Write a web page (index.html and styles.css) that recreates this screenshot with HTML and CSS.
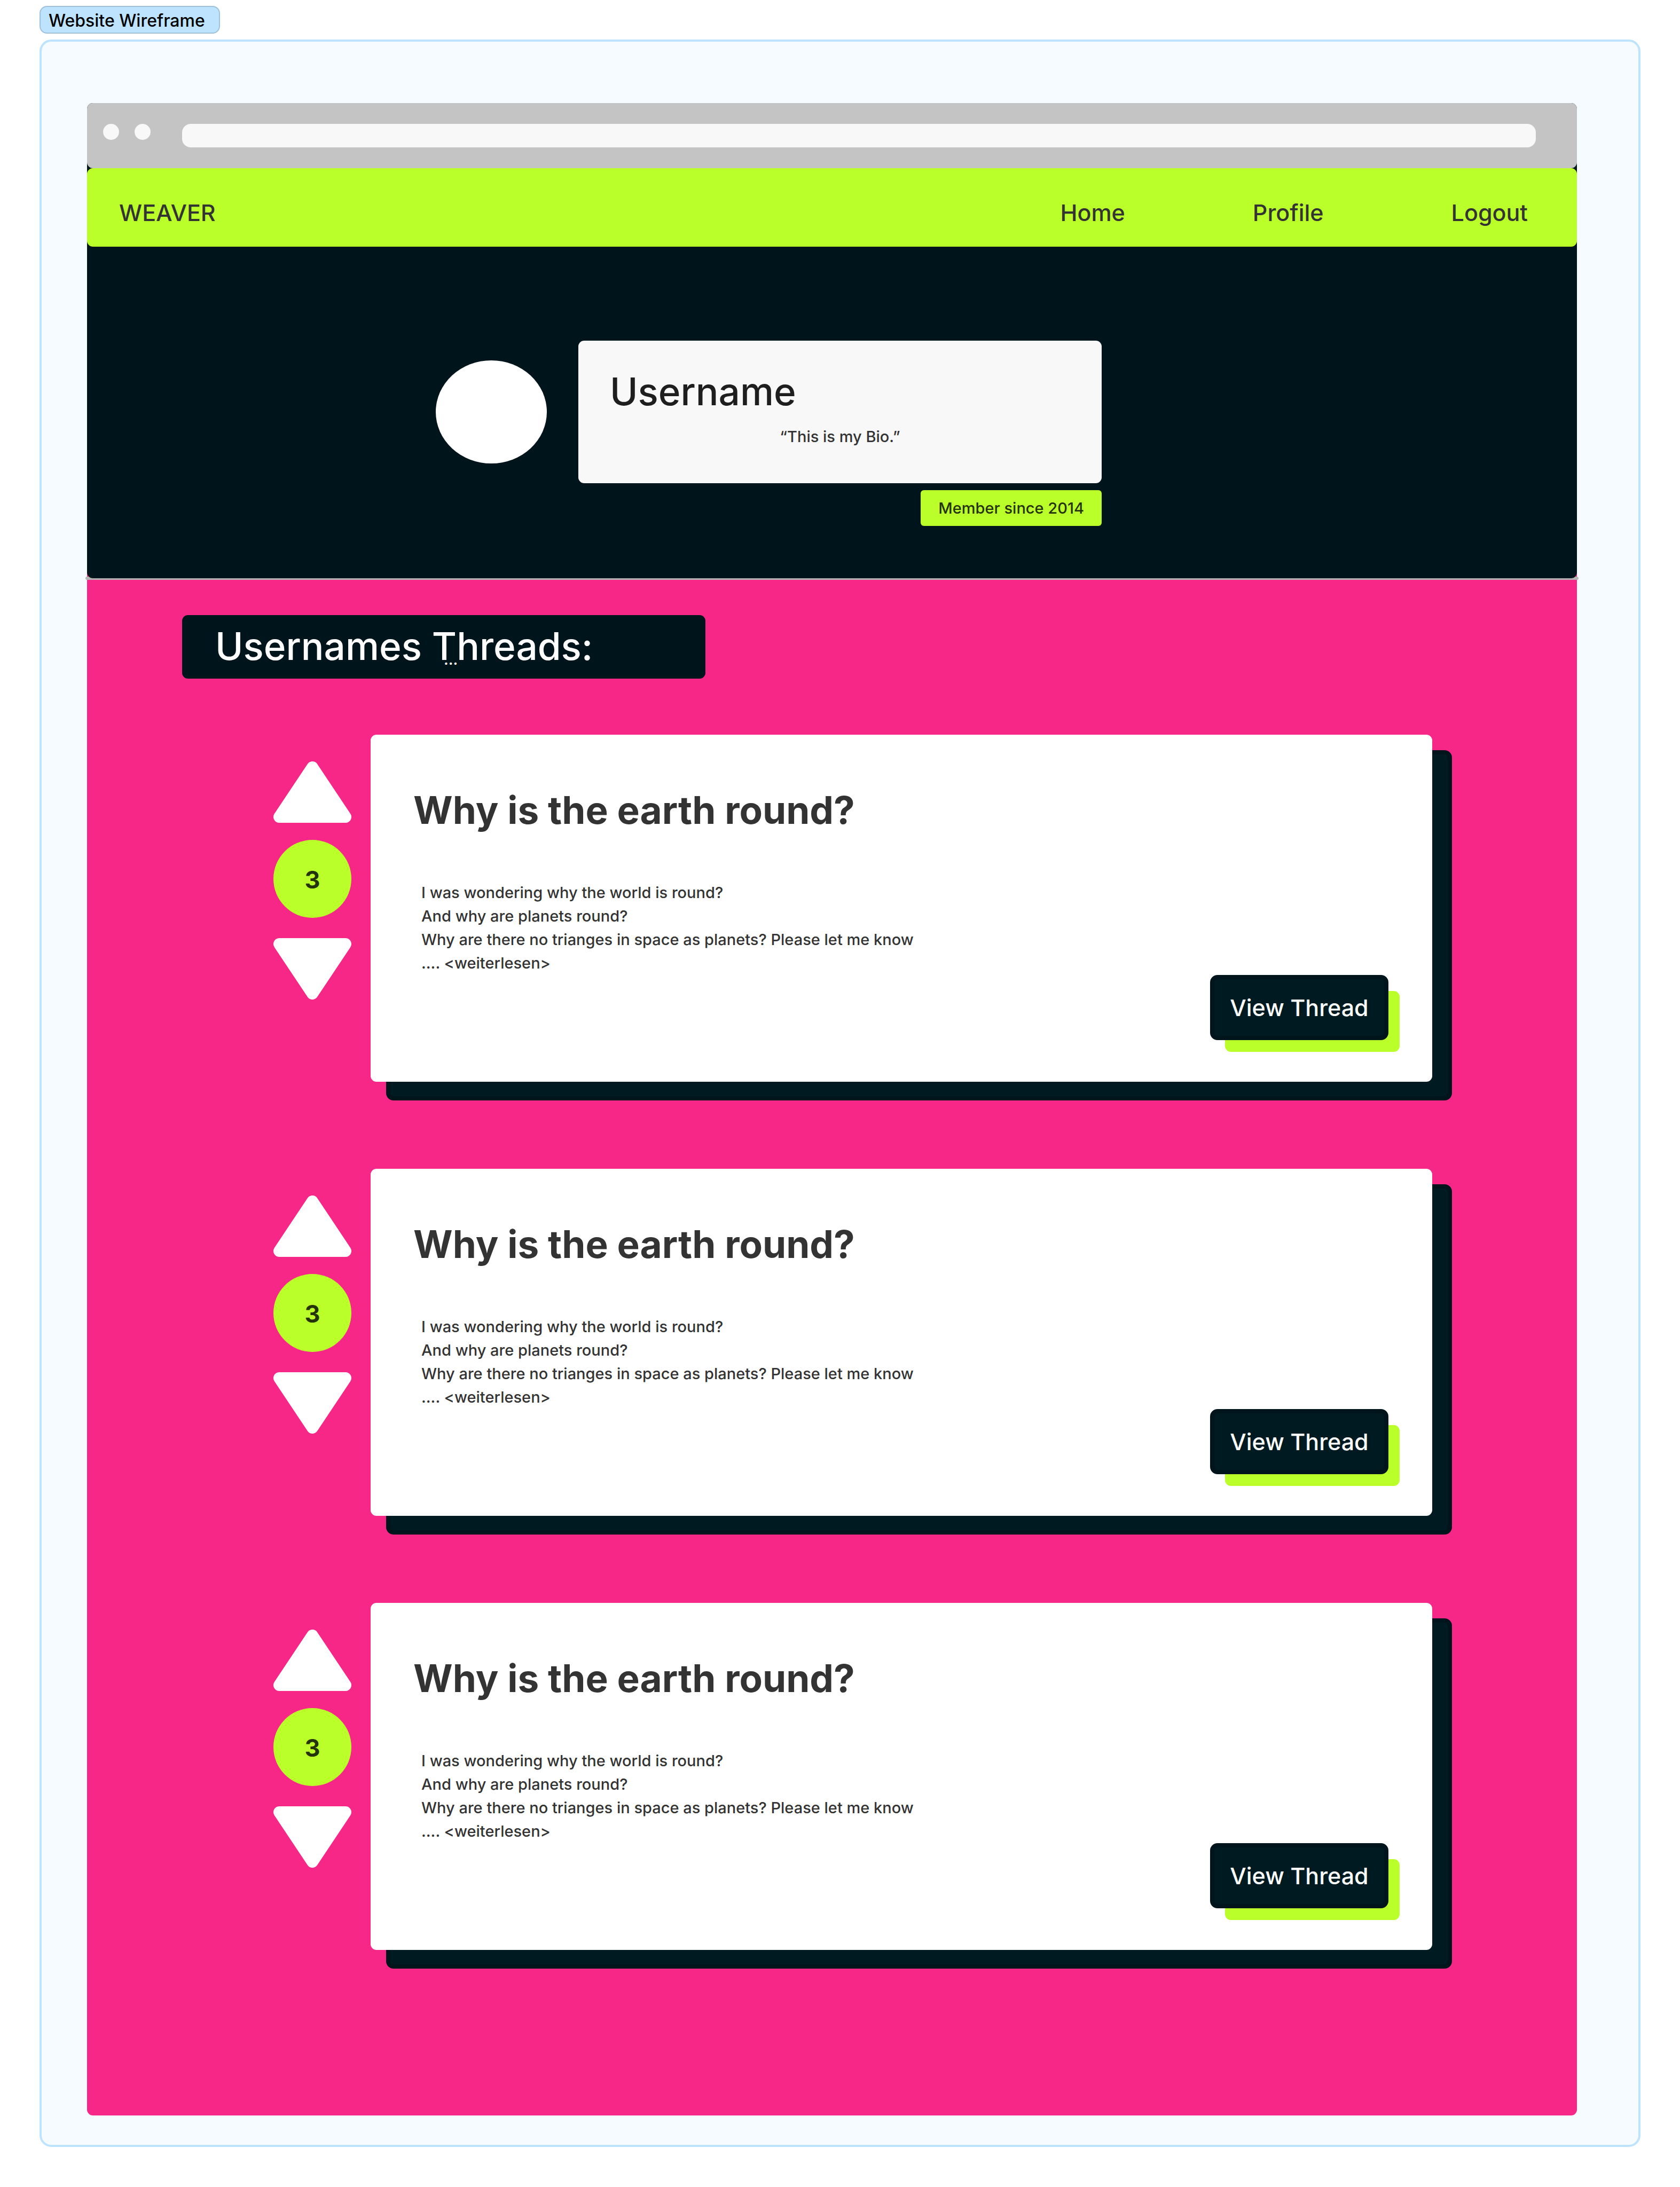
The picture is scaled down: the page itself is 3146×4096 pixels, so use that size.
FILE: index.html
```html
<!DOCTYPE html>
<html lang="en">
<head>
<meta charset="utf-8">
<meta name="viewport" content="width=device-width, initial-scale=1">
<title>Website Wireframe</title>
<link rel="stylesheet" href="styles.css">
</head>
<body>
<div class="section-label">Website Wireframe</div>
<div class="section-frame">
  <div class="wireframe">
    <div class="browser-bar">
      <span class="browser-dot"></span>
      <span class="browser-dot"></span>
      <input class="browser-url" type="text" aria-label="Address">
    </div>
    <header class="site-nav">
      <a class="nav-link" href="#">WEAVER</a>
      <nav class="nav-links">
        <a class="nav-link" href="#">Home</a>
        <a class="nav-link" href="#">Profile</a>
        <a class="nav-link" href="#">Logout</a>
      </nav>
    </header>
    <section class="hero">
      <div class="avatar"></div>
      <div class="profile">
        <div class="profile-card">
          <h1 class="profile-name">Username</h1>
          <p class="profile-bio">“This is my Bio.”</p>
        </div>
        <p class="member-badge">Member since 2014</p>
      </div>
    </section>
    <div class="hero-rule"></div>
    <main class="threads">
      <h2 class="threads-heading">Usernames Threads:<span class="threads-more">...</span></h2>
      <div class="thread-list">
        <article class="thread">
          <div class="votes">
            <button class="vote" type="button" aria-label="Vote up"><svg class="vote-icon" viewBox="0 0 146 115"><path d="M11 104 73 11l62 93z"/></svg></button>
            <span class="vote-count">3</span>
            <button class="vote" type="button" aria-label="Vote down"><svg class="vote-icon" viewBox="0 0 146 115"><path d="M11 11h124L73 104z"/></svg></button>
          </div>
          <div class="card">
            <h3 class="card-title">Why is the earth round?</h3>
            <p class="card-text">I was wondering why the world is round?<br>And why are planets round?<br>Why are there no trianges in space as planets? Please let me know<br>.... &lt;weiterlesen&gt;</p>
            <div class="card-action"><button class="view-button" type="button">View Thread</button></div>
          </div>
        </article>
        <article class="thread">
          <div class="votes">
            <button class="vote" type="button" aria-label="Vote up"><svg class="vote-icon" viewBox="0 0 146 115"><path d="M11 104 73 11l62 93z"/></svg></button>
            <span class="vote-count">3</span>
            <button class="vote" type="button" aria-label="Vote down"><svg class="vote-icon" viewBox="0 0 146 115"><path d="M11 11h124L73 104z"/></svg></button>
          </div>
          <div class="card">
            <h3 class="card-title">Why is the earth round?</h3>
            <p class="card-text">I was wondering why the world is round?<br>And why are planets round?<br>Why are there no trianges in space as planets? Please let me know<br>.... &lt;weiterlesen&gt;</p>
            <div class="card-action"><button class="view-button" type="button">View Thread</button></div>
          </div>
        </article>
        <article class="thread">
          <div class="votes">
            <button class="vote" type="button" aria-label="Vote up"><svg class="vote-icon" viewBox="0 0 146 115"><path d="M11 104 73 11l62 93z"/></svg></button>
            <span class="vote-count">3</span>
            <button class="vote" type="button" aria-label="Vote down"><svg class="vote-icon" viewBox="0 0 146 115"><path d="M11 11h124L73 104z"/></svg></button>
          </div>
          <div class="card">
            <h3 class="card-title">Why is the earth round?</h3>
            <p class="card-text">I was wondering why the world is round?<br>And why are planets round?<br>Why are there no trianges in space as planets? Please let me know<br>.... &lt;weiterlesen&gt;</p>
            <div class="card-action"><button class="view-button" type="button">View Thread</button></div>
          </div>
        </article>
      </div>
    </main>
  </div>
</div>
</body>
</html>
```
FILE: styles.css
```css
:root {
  --lime: #baff29;
  --pink: #f62787;
  --ink: #00151b;
  --ink-light: #001a22;
  --text: #333333;
}

* {
  box-sizing: border-box;
}

body {
  margin: 0;
  padding: 11px 74px 75px;
  background: #ffffff;
  color: var(--text);
  font-family: Inter, "Liberation Sans", sans-serif;
  font-size: 29px;
  font-weight: 500;
  line-height: 44px;
}

h1, h2, h3, p {
  margin: 0;
}

button, input {
  font: inherit;
}

.section-label {
  width: fit-content;
  margin-bottom: 11px;
  padding: 4px 26px 0 15px;
  border: 2px solid #9fc1db;
  border-radius: 14px;
  background: #bde3ff;
  color: #000000;
  font-size: 32px;
}

.section-frame {
  padding: 115px 115px 55px 85px;
  border: 4px solid #bde3ff;
  border-radius: 22px;
  background: #f5fbff;
}

.wireframe {
  border-radius: 11px;
  background: linear-gradient(var(--ink) 600px, var(--pink) 600px);
}

.browser-bar {
  display: flex;
  align-items: flex-start;
  gap: 29px;
  padding: 39px 77px 39px 30px;
  border-radius: 11px;
  background: #c4c4c4;
}

.browser-dot {
  flex: none;
  width: 30px;
  height: 30px;
  border-radius: 50%;
  background: #f8f8f8;
}

.browser-url {
  flex: 1;
  min-width: 0;
  height: 44px;
  margin-left: 30px;
  padding: 0 16px;
  border: 0;
  border-radius: 16px;
  background: #f8f8f8;
}

.site-nav {
  display: flex;
  align-items: center;
  justify-content: space-between;
  min-height: 147px;
  padding: 18px 92px 0 60px;
  border-radius: 11px;
  background: var(--lime);
}

.nav-links {
  display: flex;
  gap: 239px;
}

.nav-link {
  color: var(--text);
  font-size: 43px;
  text-decoration: none;
}

.hero {
  position: relative;
  z-index: 1;
  display: flex;
  gap: 59px;
  padding: 176px 60px 98px 653px;
  border-radius: 0 0 11px 11px;
  background: var(--ink);
}

.avatar {
  flex: none;
  width: 208px;
  height: 193px;
  margin-top: 37px;
  border-radius: 50%;
  background: #ffffff;
}

.profile {
  display: flex;
  flex: 0 1 980px;
  flex-direction: column;
  gap: 13px;
}

.profile-card {
  padding: 50px 59px 65px;
  border-radius: 11px;
  background: #f8f8f8;
}

.profile-name {
  margin-bottom: 18px;
  color: #1e1e1e;
  font-size: 71px;
  font-weight: 500;
  line-height: 90px;
}

.profile-bio {
  text-align: center;
}

.member-badge {
  align-self: flex-end;
  padding: 12px 33px 11px;
  border-radius: 6px;
  background: var(--lime);
  color: #253308;
}

.hero-rule {
  height: 6px;
  margin: -3px -3px 0;
  border-radius: 3px;
  background: #b3b3b3;
}

.threads {
  padding: 66px 0 310px;
}

.threads-heading {
  position: relative;
  width: 980px;
  max-width: 100%;
  margin-left: 178px;
  padding: 13px 62px 16px;
  border-radius: 11px;
  background: var(--ink);
  color: #ffffff;
  font-size: 71px;
  font-weight: 500;
  line-height: 90px;
}

.threads-more {
  position: absolute;
  top: 61px;
  left: 490px;
  font-size: 29px;
  line-height: 44px;
}

.thread-list {
  display: flex;
  flex-direction: column;
  gap: 163px;
  margin-top: 105px;
  padding: 0 271px 0 349px;
}

.thread {
  display: flex;
  gap: 36px;
}

.votes {
  display: flex;
  flex: none;
  flex-direction: column;
  width: 146px;
  padding-top: 50px;
}

.vote {
  display: block;
  height: 115px;
  padding: 0;
  border: 0;
  background: none;
  cursor: pointer;
}

.vote-icon {
  display: block;
  width: 146px;
  height: 115px;
  fill: #ffffff;
  stroke: #ffffff;
  stroke-linejoin: round;
  stroke-width: 22px;
}

.vote-count {
  height: 146px;
  margin: 32px 0 38px;
  border-radius: 50%;
  background: var(--lime);
  color: #253308;
  font-size: 45px;
  font-weight: 700;
  line-height: 150px;
  text-align: center;
}

.card {
  position: relative;
  z-index: 0;
  display: flex;
  flex: 1;
  flex-direction: column;
  padding: 96px 82px 78px 80px;
}

/* Offset block behind the card; the card's own face is painted above it. */
.card::before,
.card::after {
  position: absolute;
  z-index: -1;
  content: "";
}

.card::before {
  inset: 29px -37px -35px 29px;
  border: 8px solid var(--ink);
  border-radius: 14px;
  background: var(--ink-light);
}

.card::after {
  inset: 0;
  border-radius: 11px;
  background: #ffffff;
}

.card-title {
  font-size: 71px;
  font-weight: 700;
  line-height: 90px;
}

.card-text {
  margin-top: 88px;
  padding-left: 15px;
}

.card-action {
  position: relative;
  z-index: 0;
  align-self: flex-end;
}

.card-action::before {
  position: absolute;
  z-index: -1;
  inset: 30px -21px -22px 28px;
  border-radius: 11px;
  background: var(--lime);
  content: "";
}

.view-button {
  display: block;
  width: 334px;
  height: 122px;
  padding: 0;
  border: 8px solid var(--ink);
  border-radius: 14px;
  background: var(--ink-light);
  color: #ffffff;
  font-size: 43px;
  cursor: pointer;
}
```
